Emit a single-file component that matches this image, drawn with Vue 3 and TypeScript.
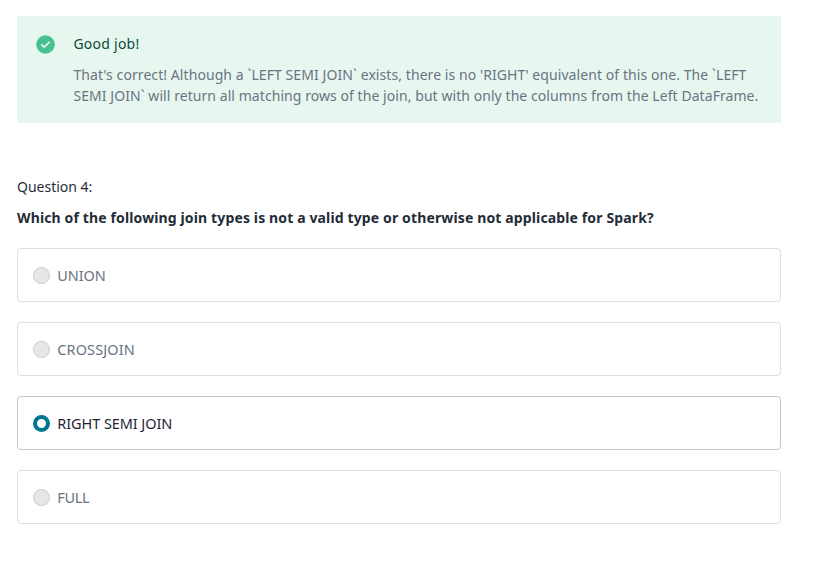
<script setup lang="ts">
import { ref } from 'vue'

interface Choice {
  id: string
  label: string
}

const choices: Choice[] = [
  { id: 'union', label: 'UNION' },
  { id: 'cross', label: 'CROSSJOIN' },
  { id: 'semi', label: 'RIGHT SEMI JOIN' },
  { id: 'full', label: 'FULL' },
]

const selected = ref<string>('semi')
</script>

<template>
  <main class="quiz">
    <section class="feedback" role="status">
      <svg class="feedback-icon" viewBox="0 0 19 19" aria-hidden="true">
        <circle cx="9.5" cy="9.5" r="9.3" fill="#47c28e" />
        <path d="M5.3 9.3 8.2 12.1 13.6 6.8" fill="none" stroke="#e7f7f0" stroke-width="1.8" />
      </svg>
      <div class="feedback-body">
        <h2 class="feedback-title">Good job!</h2>
        <p class="feedback-text">
          <span class="line first">That's correct! Although a `LEFT SEMI JOIN` exists, there is no 'RIGHT' equivalent of this one. The `LEFT</span>
          <span class="line second">SEMI JOIN` will return all matching rows of the join, but with only the columns from the Left DataFrame.</span>
        </p>
      </div>
    </section>

    <p class="number">Question 4:</p>
    <h1 class="question">Which of the following join types is not a valid type or otherwise not applicable for Spark?</h1>

    <div class="choices" role="radiogroup">
      <div
        v-for="choice in choices"
        :key="choice.id"
        class="choice"
        :class="[choice.id, { selected: selected === choice.id }]"
        role="radio"
        :aria-checked="selected === choice.id"
        @click="selected = choice.id"
      >
        <span class="dot"></span>
        <span class="label">{{ choice.label }}</span>
      </div>
    </div>
  </main>
</template>

<style>
body {
  background: #fff;
}
</style>

<style scoped>
.quiz {
  box-sizing: border-box;
  width: 781px;
  padding: 16px 0 0 17px;
  font-family: "Noto Sans", "Open Sans", sans-serif;
  font-size: 14px;
  line-height: 21px;
  color: #1f2d38;
}

.feedback {
  display: flex;
  box-sizing: border-box;
  height: 107px;
  padding: 17px 0 0 19px;
  background: #e7f7f0;
}

.feedback-icon {
  flex: none;
  width: 19px;
  height: 19px;
  margin-top: 2px;
}

.feedback-body {
  margin-left: 18.4px;
}

.feedback-title {
  margin: 0;
  font-size: 14px;
  font-weight: 400;
  letter-spacing: 0.25px;
  color: #0a4a34;
}

.feedback-text {
  margin: 10px 0 0;
  color: #6a7480;
}

.line {
  display: block;
  width: max-content;
  white-space: nowrap;
}

.first {
  letter-spacing: 0.074px;
}

.second {
  letter-spacing: 0.062px;
}

.number {
  margin: 53px 0 0;
}

.question {
  width: max-content;
  margin: 10px 0 0;
  font-size: 14px;
  font-weight: 700;
  letter-spacing: 0.133px;
  white-space: nowrap;
}

.choices {
  display: flex;
  flex-direction: column;
  gap: 20px;
  margin-top: 20px;
}

.choice {
  display: flex;
  align-items: center;
  box-sizing: border-box;
  height: 54px;
  padding-left: 15px;
  border: 1px solid #dedfe0;
  border-radius: 4px;
  color: #6a7480;
  font-size: 14.5px;
  letter-spacing: -0.08px;
}

.cross {
  letter-spacing: 0.1px;
}

.full {
  letter-spacing: -0.3px;
}

.dot {
  box-sizing: border-box;
  width: 17px;
  height: 17px;
  margin-right: 7.3px;
  border: 1px solid #c9cbcd;
  border-radius: 50%;
  background: #e6e7e9;
}

.selected {
  border-color: #c5c7c9;
  color: #1f1f33;
}

.selected .dot {
  border: 4px solid #007791;
  background: #fff;
}
</style>
